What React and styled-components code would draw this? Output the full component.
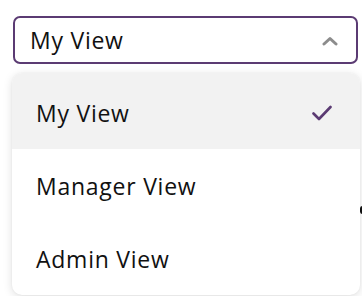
import React from "react";
import styled, { createGlobalStyle } from "styled-components";

const Global = createGlobalStyle`
  html, body { margin: 0; padding: 0; background: #ffffff; }
  body { font-family: "Open Sans", "Noto Sans", sans-serif; overflow: hidden; }
`;

const Page = styled.div`
  position: relative;
  width: 362px;
  height: 296px;
  overflow: hidden;
  padding: 16px 4px 0 13px;
  box-sizing: border-box;
`;

const Select = styled.div`
  box-sizing: border-box;
  width: 345px;
  height: 48px;
  border: 2px solid #5b3b73;
  border-radius: 7px;
  display: flex;
  align-items: center;
  justify-content: space-between;
  padding: 0 18px 0 15px;
`;

const Label = styled.span`
  font-size: 23px;
  letter-spacing: 0.75px;
  color: #111111;
`;

const Backdrop = styled.div`
  display: flex;
  flex-direction: column;
  align-items: flex-start;
  padding-left: 347px;
  margin-top: 101px;
  gap: 40px;
`;

const Divider = styled.div`
  align-self: stretch;
  height: 1px;
  background: #d8d8d8;
`;

const Mark = styled.div`
  width: 5px;
  height: 8px;
  border: 2px solid #111;
  border-radius: 4px;
  box-sizing: border-box;
`;

const Menu = styled.ul`
  position: absolute;
  left: 12px;
  top: 73px;
  width: 348px;
  margin: 0;
  padding: 0;
  list-style: none;
  background: #ffffff;
  border-radius: 10px;
  overflow: hidden;
  box-shadow: 0 2px 10px rgba(0, 0, 0, 0.13), 0 0 2px rgba(0, 0, 0, 0.05);
`;

const Item = styled.li`
  display: flex;
  align-items: center;
  justify-content: space-between;
  height: ${(p) => p.$h}px;
  padding: ${(p) => (p.$h > 73 ? "3px" : "0")} 28px 0 24px;
  box-sizing: border-box;
  background: ${(p) => (p.$active ? "#f2f2f2" : "transparent")};
`;

const Chevron = () => (
  <svg width="16" height="10" viewBox="0 0 16 10" style={{ marginTop: 1 }}>
    <path d="M2 8 L8 2.5 L14 8" fill="none" stroke="#8c8c8c" strokeWidth="3" strokeLinecap="round" strokeLinejoin="round" />
  </svg>
);

const Check = () => (
  <svg width="20" height="16" viewBox="0 0 20 16">
    <path d="M1.5 8.5 L7 14 L18.5 2" fill="none" stroke="#5b3b73" strokeWidth="2.6" strokeLinecap="round" strokeLinejoin="round" />
  </svg>
);

const options = [
  { label: "My View", active: true, h: 76 },
  { label: "Manager View", active: false, h: 73 },
  { label: "Admin View", active: false, h: 73 },
];

export default function App() {
  return (
    <>
      <Global />
      <Page>
        <Select>
          <Label>My View</Label>
          <Chevron />
        </Select>
        <Backdrop>
          <Divider />
          <Mark />
        </Backdrop>
        <Menu>
          {options.map((o) => (
            <Item key={o.label} $active={o.active} $h={o.h}>
              <Label>{o.label}</Label>
              {o.active && <Check />}
            </Item>
          ))}
        </Menu>
      </Page>
    </>
  );
}
